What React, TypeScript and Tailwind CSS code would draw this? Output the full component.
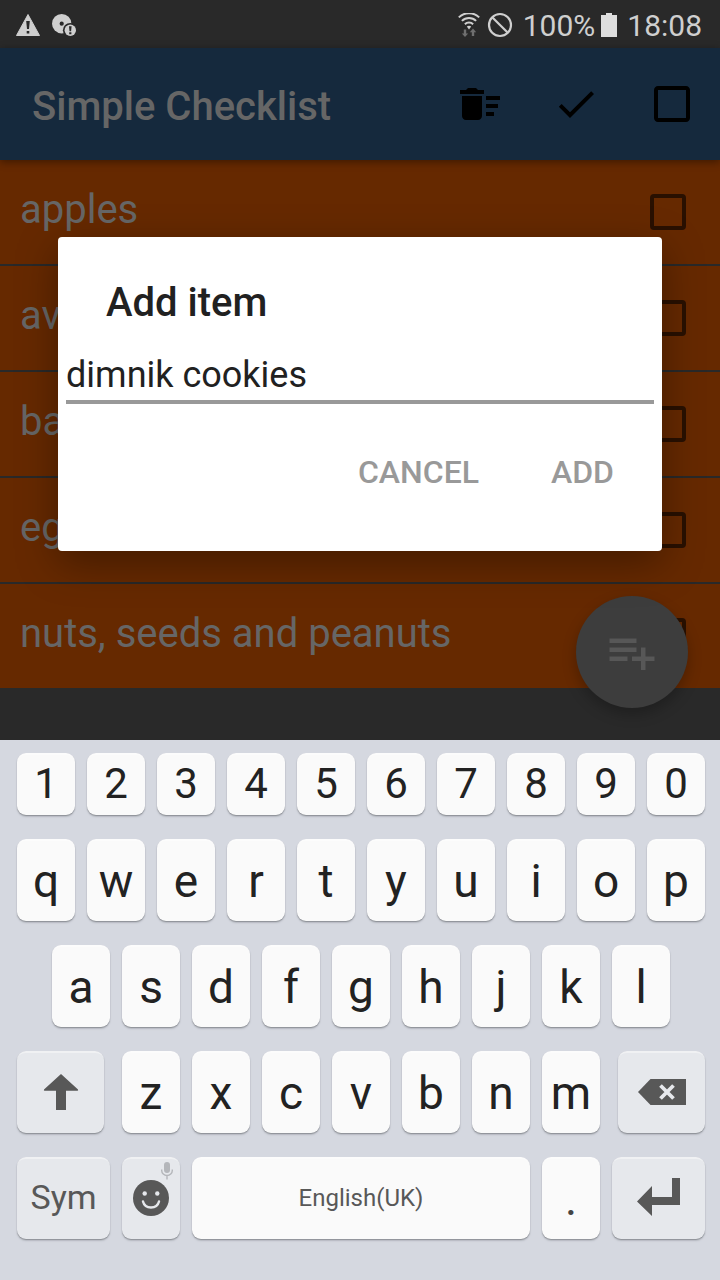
import type { ReactNode } from "react";
import { MdCheck, MdCheckBoxOutlineBlank, MdDeleteSweep } from "react-icons/md";

const items = ["apples", "av", "ba", "eg", "nuts, seeds and peanuts"];

function StatusBar() {
  return (
    <div className="flex h-12 items-center justify-between bg-[#292929] pt-0.5 pr-[18px] pl-4 text-[#cfcfcf]">
      <div className="flex items-center gap-3">
        <svg className="h-6 w-6" viewBox="0 0 24 24" role="img" aria-label="Warning">
          <path d="M12 1.5 23.5 22.5H.5Z" fill="#cfcfcf" stroke="#cfcfcf" strokeLinejoin="round" />
          <path d="M10.2 8h3.6l-.8 8h-2zM10.700 18h2.600v2.400h-2.600z" fill="#292929" />
        </svg>
        <svg className="h-6 w-6" viewBox="0 0 24 24" role="img" aria-label="Disc error">
          <circle cx="9.7" cy="10.700" r="9.700" fill="#cfcfcf" />
          <circle cx="9.7" cy="10.700" r="2.100" fill="#292929" />
          <circle cx="18.3" cy="17.300" r="7.400" fill="#292929" />
          <circle cx="18.3" cy="17.300" r="5.700" fill="#cfcfcf" />
          <path d="M17 13.300h2.600l-.5 5h-1.600zM17.200 19.300h2.200v2h-2.200z" fill="#292929" />
        </svg>
      </div>
      <div className="flex items-center">
        <svg className="mr-1.5 h-6 w-6" viewBox="0 0 24 24" role="img" aria-label="Wi-Fi">
          <g fill="none" stroke="#cfcfcf" strokeWidth="2">
            <path d="M1.8 4.400a14.500 14.500 0 0 1 20.400 0" />
            <path d="M4.900 7.900a10 10 0 0 1 14.200 0" />
            <path d="M7.900 11.200a5.700 5.700 0 0 1 8.200 0" />
          </g>
          <path d="M9.800 13.600q2.200-1.600 4.400 0L12 16.400z" fill="#cfcfcf" />
          <path d="M6.800 16.500h2.400v4h2L8 24l-3.200-3.500h2zM14.800 23v-3.800h-2L16 15.600l3.200 3.600h-2V23z" fill="#6f6f6f" />
        </svg>
        <svg className="mr-2.5 h-[26px] w-[26px]" viewBox="0 0 26 26" fill="none" stroke="#cfcfcf" strokeWidth="2.200" role="img" aria-label="Blocked">
          <circle cx="13" cy="13" r="11" />
          <path d="M5.200 5.200 20.800 20.800" />
        </svg>
        <span className="pt-0.5 text-[30px] leading-none">100%</span>
        <svg className="mr-2.5 ml-1.5 h-6 w-4" viewBox="0 0 16 24" fill="#dedede" role="img" aria-label="Battery full">
          <path d="M5 0h6v2h5v22H0V2h5z" />
        </svg>
        <span className="pt-0.5 text-[30px] leading-none">18:08</span>
      </div>
    </div>
  );
}

function ToolButton({ label, children }: { label: string; children: ReactNode }) {
  return (
    <button type="button" aria-label={label} className="flex w-24 items-center justify-center text-5xl text-black">
      {children}
    </button>
  );
}

function Key({ label, className, children }: { label?: string; className: string; children: ReactNode }) {
  return (
    <button
      type="button"
      aria-label={label}
      className={`relative flex min-w-0 items-center justify-center rounded-[9px] border-t-2 border-white/40 shadow-[0_1px_1px_#8f9298,0_2px_2px_#b9bcc4] ${className}`}
    >
      {children}
    </button>
  );
}

const letterKey = "h-[82px] flex-1 bg-[#fafafa] text-[46px] leading-none text-[#222]";

function Letters({ letters }: { letters: string }) {
  return (
    <>
      {letters.split("").map((c) => (
        <Key key={c} className={letterKey}>
          {c}
        </Key>
      ))}
    </>
  );
}

function Keyboard() {
  return (
    <div className="flex flex-col gap-6 bg-[#d5d8e0] pt-[13px] pr-[15px] pb-[41px] pl-[17px]">
      <div className="flex gap-3">
        {"1234567890".split("").map((c) => (
          <Key key={c} className="h-[62px] flex-1 bg-[#fafafa] pb-0.5 text-[42px] leading-none text-[#222]">
            {c}
          </Key>
        ))}
      </div>
      <div className="flex gap-3">
        <Letters letters="qwertyuiop" />
      </div>
      <div className="flex gap-3 px-[35px]">
        <Letters letters="asdfghjkl" />
      </div>
      <div className="flex gap-[18px]">
        <Key label="Shift" className="h-[82px] flex-[87] bg-[#e6e8ec] pb-0.5">
          <svg className="h-9 w-9" viewBox="0 0 36 36" fill="#585858">
            <path d="M18 0 35 15.500q.6 1.300-.8 1.300H23V36H13V16.800H1.800Q.4 16.800 1 15.500z" />
          </svg>
        </Key>
        <div className="flex flex-[478] gap-3">
          <Letters letters="zxcvbnm" />
        </div>
        <Key label="Backspace" className="h-[82px] flex-[87] bg-[#e6e8ec] pb-0.5">
          <svg className="h-[26px] w-12" viewBox="0 0 48 26">
            <path d="M12.500 0H48V26H12.500L0 13z" fill="#585858" />
            <path d="m22.500 6.500 13 13m0-13-13 13" stroke="#e6e8ec" strokeWidth="3.800" />
          </svg>
        </Key>
      </div>
      <div className="flex gap-3">
        <Key className="h-[82px] flex-[93] bg-[#e6e8ec] pb-1 text-[34px] leading-none text-[#585858]">Sym</Key>
        <Key label="Emoji and voice input" className="h-[82px] flex-[58] bg-[#e6e8ec] pb-0.5">
          <svg className="absolute top-[3px] right-[7px] h-[18px] w-3" viewBox="0 0 12 18">
            <rect x="3" y="0" width="6" height="11" rx="3" fill="#b4b6ba" />
            <path d="M.700 7.500v1a5.300 5 0 0 0 10.600 0v-1M6 13.500V17.500" fill="none" stroke="#b4b6ba" strokeWidth="1.400" />
          </svg>
          <svg className="h-9 w-9" viewBox="0 0 36 36">
            <circle cx="18" cy="18" r="18" fill="#585858" />
            <circle cx="11.700" cy="13.500" r="2.200" fill="#e6e8ec" />
            <circle cx="24.300" cy="13.500" r="2.200" fill="#e6e8ec" />
            <path d="M10 21.500c2 8 14 8 16 0" fill="none" stroke="#e6e8ec" strokeWidth="2.400" strokeLinecap="round" />
          </svg>
        </Key>
        <Key className="h-[82px] flex-[338] bg-[#fafafa] pb-0.5 text-2xl leading-none text-[#585858]">English(UK)</Key>
        <Key className="h-[82px] flex-[58] bg-[#fafafa] text-[46px] leading-none text-[#444]">.</Key>
        <Key label="Enter" className="h-[82px] flex-[93] bg-[#e6e8ec] pb-1">
          <svg className="h-[38px] w-11" viewBox="0 0 44 38" fill="#585858">
            <path d="M35 0h8v27H15v11L0 23.500 15 8v11H35z" />
          </svg>
        </Key>
      </div>
    </div>
  );
}

export default function App() {
  return (
    <div className="flex min-h-screen flex-col bg-[#292929] font-[Roboto,sans-serif]">
      <div className="relative flex flex-1 flex-col">
        <StatusBar />
        <header className="relative flex h-28 bg-[#15293d] shadow-[0_2px_8px_rgba(0,0,0,0.4)]">
          <h1 className="flex flex-1 items-center pt-1.5 pl-8 text-[40px] leading-none font-medium text-[#666]">Simple Checklist</h1>
          <ToolButton label="Delete checked items">
            <MdDeleteSweep />
          </ToolButton>
          <ToolButton label="Check all">
            <MdCheck />
          </ToolButton>
          <ToolButton label="Uncheck all">
            <MdCheckBoxOutlineBlank />
          </ToolButton>
        </header>
        <ul className="divide-y-2 divide-[#292929] bg-[#662900]">
          {items.map((item) => (
            <li key={item}>
              <label className="flex h-[104px] items-center justify-between pr-[34px] pl-5 text-[40px] leading-none text-[#666]">
                <span className="pb-1">{item}</span>
                <input type="checkbox" className="h-9 w-9 appearance-none rounded-[4px] border-4 border-[#291000]" />
              </label>
            </li>
          ))}
        </ul>
        <button
          type="button"
          aria-label="Add item"
          className="absolute right-8 bottom-8 flex h-28 w-28 items-center justify-center rounded-full bg-[#3d3d3d] shadow-[0_6px_14px_rgba(0,0,0,0.25)]"
        >
          <svg className="h-[54px] w-[54px]" viewBox="0 0 24 24" fill="#575757">
            <path d="M14 10H2v2h12v-2zm0-4H2v2h12V6zm4 8v-4h-2v4h-4v2h4v4h2v-4h4v-2h-4zM2 16h8v-2H2v2z" />
          </svg>
        </button>
        <div className="absolute inset-x-0 top-12 bottom-0 flex items-center px-[58px]">
          <form
            role="dialog"
            aria-labelledby="dialog-title"
            className="flex-1 rounded-[4px] bg-white px-2 pt-11 pb-[31px] shadow-[0_12px_40px_rgba(0,0,0,0.35)]"
          >
            <h2 id="dialog-title" className="px-10 text-[40px] leading-[44px] font-medium text-[#212121]">
              Add item
            </h2>
            <input
              type="text"
              aria-labelledby="dialog-title"
              defaultValue="dimnik cookies"
              className="mt-5 h-[59px] w-full border-b-4 border-[#999] pt-1 text-4xl text-[#212121] outline-none"
            />
            <div className="mt-5 flex justify-end gap-2 pr-2">
              <button type="button" className="h-24 px-8 text-[32px] font-medium text-[#999]">
                CANCEL
              </button>
              <button type="button" className="h-24 px-8 text-[32px] font-medium text-[#999]">
                ADD
              </button>
            </div>
          </form>
        </div>
      </div>
      <Keyboard />
    </div>
  );
}
